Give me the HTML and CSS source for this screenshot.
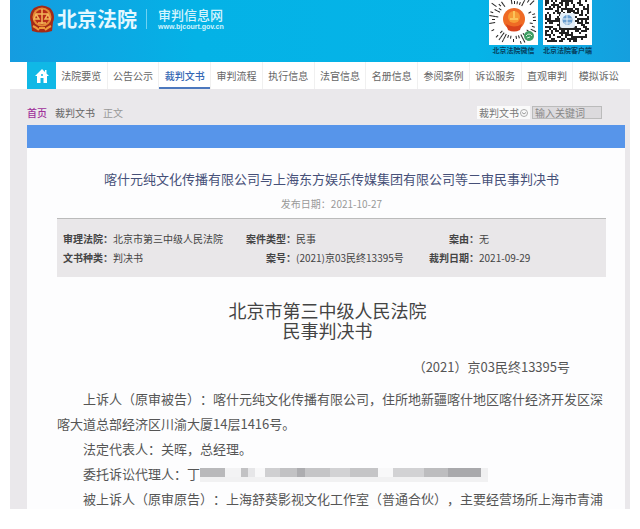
FILE: index.html
```html
<!DOCTYPE html>
<html lang="zh-CN">
<head>
	<meta charset="UTF-8">
	<title>北京法院审判信息网</title>
	<link rel="stylesheet" href="styles.css">
</head>
<body>
	<div class="page">
		<header class="header">
			<svg class="emblem" viewBox="0 0 26 28">
				<path d="M5 3Q13 -2 21 3Q27 9 24 17L23 26Q13 29 3 26L2 17Q-1 9 5 3z" fill="#a52a16"/>
				<circle cx="13" cy="12" r="9.5" fill="#e58a35"/>
				<circle cx="13" cy="12" r="7.5" fill="#b92c18"/>
				<path d="M13 4v15M7 9h12M7 9l-2 5h5zM19 9l-3 5h5zM9 18h8" stroke="#f4b65a" stroke-width="1.5" fill="none"/>
				<path d="M4 21q4 2 6 4M22 21q-4 2-6 4M10 23h6" stroke="#ef9a3b" stroke-width="2" fill="none"/>
			</svg>
			<h1 class="logo">北京法院</h1>
			<div class="site">
				<span class="site-name">审判信息网</span>
				<span class="site-url">www.bjcourt.gov.cn</span>
			</div>
			<div class="codes">
				<figure class="code">
					<svg class="qr" id="qrRound" viewBox="0 0 49 49">
						<g class="dots"></g>
						<circle cx="25" cy="24" r="13" fill="#fff"/>
						<circle cx="25" cy="23" r="11" fill="#ef6a24"/>
						<circle cx="25" cy="21" r="6" fill="#f79a35"/>
						<path d="M17 28q8 5 16 0l-2 6q-6 3-12 0z" fill="#d9421c"/>
						<path d="M25 15v8M21 23h8" stroke="#fbc45a" stroke-width="2"/>
						<circle cx="40" cy="40" r="5" fill="#3f9e63"/>
						<path d="M37 40q3-4 6 0M38 42l3-1" stroke="#d4f0dc" fill="none"/>
					</svg>
					<figcaption>北京法院微信</figcaption>
				</figure>
				<figure class="code">
					<svg class="qr" id="qrSquare" viewBox="0 0 49 49">
						<g class="dots"></g>
						<rect x="17" y="17" width="15" height="15" rx="2" fill="#e4eff8"/>
						<circle cx="24.5" cy="24" r="5" fill="#6a9fd0"/>
						<path d="M24 19v10M20 23h9M21 27h7" stroke="#e4eff8"/>
					</svg>
					<figcaption>北京法院客户端</figcaption>
				</figure>
			</div>
		</header>
		<nav class="nav">
			<a class="home" href="#" aria-label="首页">
				<svg viewBox="0 0 14 14"><path d="M7 0L0 7h2v7h3.500V9h3v5H12V7h2L11.500 4.500V1H10v2z" fill="#fff"/><circle cx="7" cy="6" r="1" fill="#10b8e6"/></svg>
			</a>
			<a href="#">法院要览</a>
			<a href="#">公告公示</a>
			<a class="active" href="#">裁判文书</a>
			<a href="#">审判流程</a>
			<a href="#">执行信息</a>
			<a href="#">法官信息</a>
			<a href="#">名册信息</a>
			<a href="#">参阅案例</a>
			<a href="#">诉讼服务</a>
			<a href="#">直观审判</a>
			<a href="#">模拟诉讼</a>
		</nav>
		<main class="content">
			<div class="bar">
				<div class="crumbs">
					<a href="#">首页</a>
					<span>裁判文书</span>
					<em>正文</em>
				</div>
				<form class="search">
					<div class="type">
						<select aria-label="类型"><option>裁判文书</option></select>
						<svg viewBox="0 0 8 8"><circle cx="4" cy="4" r="3.500" fill="none" stroke="#aaa"/><path d="M2 3.500l2 1.500 2-1.500" fill="none" stroke="#999"/></svg>
					</div>
					<input type="text" placeholder="输入关键词" aria-label="关键词">
				</form>
			</div>
			<article class="doc">
				<div class="strip"></div>
				<h2 class="title">喀什元纯文化传播有限公司与上海东方娱乐传媒集团有限公司等二审民事判决书</h2>
				<p class="date">发布日期：2021-10-27</p>
				<table class="info">
					<tr>
						<th>审理法院：</th><td>北京市第三中级人民法院</td>
						<th>案件类型：</th><td>民事</td>
						<th>案由：</th><td>无</td>
					</tr>
					<tr>
						<th>文书种类：</th><td>判决书</td>
						<th>案号：</th><td>(2021)京03民终13395号</td>
						<th>裁判日期：</th><td>2021-09-29</td>
					</tr>
				</table>
				<h3 class="court">北京市第三中级人民法院<br>民事判决书</h3>
				<p class="number">（2021）京03民终13395号</p>
				<div class="text">
					<p>上诉人（原审被告）：喀什元纯文化传播有限公司，住所地新疆喀什地区喀什经济开发区深喀大道总部经济区川渝大厦14层1416号。</p>
					<p>法定代表人：关晖，总经理。</p>
					<p>委托诉讼代理人：丁<span class="mask"></span></p>
					<p>被上诉人（原审原告）：上海舒葵影视文化工作室（普通合伙），主要经营场所上海市青浦</p>
				</div>
			</article>
		</main>
	</div>
	<script src="script.js"></script>
</body>
</html>
```
FILE: styles.css
```css
*{
	margin: 0;
	padding: 0;
	box-sizing: border-box;
}
body{
	font-family: "Noto Sans CJK SC", sans-serif;
	font-size: 10px;
	color: #444;
	background: #fff;
	padding: 0 10px 20px;
	height: 100vh;
	overflow: hidden;
	text-spacing-trim: space-all;
}
a{
	color: inherit;
	text-decoration: none;
}
.page{
	height: 100%;
	overflow: hidden;
	background: #eae8eb;
}
.header{
	height: 62px;
	display: flex;
	padding: 0 38px 0 19px;
	background: linear-gradient(90deg, #159ce0, #04b2e6 30%, #05b4e8 75%, #159fde);
}
.emblem{
	width: 26px;
	height: 28px;
	margin-top: 5px;
}
.logo{
	font-size: 20px;
	line-height: 38px;
	font-weight: 700;
	color: #e4f8ff;
	margin-left: 2px;
}
.site{
	height: 20px;
	margin: 9px 0 0 9px;
	padding-left: 11px;
	border-left: 1px solid #6fd2f2;
	color: #d4f4fd;
	display: flex;
	flex-direction: column;
	gap: 2px;
}
.site-name{
	font-size: 13px;
	line-height: 12px;
	font-weight: 500;
}
.site-url{
	font-family: "Liberation Sans", sans-serif;
	font-size: 7px;
	line-height: 8px;
	font-weight: 700;
}
.codes{
	margin-left: auto;
	display: flex;
	gap: 5px;
}
.code{
	width: 49px;
	height: 56px;
	display: flex;
	flex-direction: column;
	justify-content: flex-end;
	overflow: hidden;
}
.qr{
	width: 49px;
	height: 49px;
	flex: none;
	background: #fff;
}
.code figcaption{
	font-size: 7px;
	line-height: 11px;
	font-weight: 700;
	color: #06405f;
	text-align: center;
	white-space: nowrap;
}
.nav{
	height: 27px;
	display: flex;
	background: #fff;
	padding-right: 6px;
	padding-left: 17px;
	color: #666;
}
.nav a{
	flex: 1;
	line-height: 27px;
	text-align: center;
	white-space: nowrap;
	border-right: 1px solid #f0f0f0;
}
.nav a:last-child{
	border-right: 0;
}
.nav .home{
	flex: none;
	width: 29px;
	background: #10b8e6;
	border: 0;
	display: flex;
	align-items: center;
	justify-content: center;
}
.home svg{
	width: 14px;
	height: 14px;
}
.nav .active{
	color: #3568b4;
	font-weight: 500;
	box-shadow: inset 0 -2px #4c78be;
}
.content{
	padding: 0 5px 0 17px;
}
.bar{
	height: 36px;
	display: flex;
	align-items: center;
	justify-content: space-between;
	padding: 11px 23px 0 0;
}
.crumbs{
	display: flex;
	gap: 8px;
	line-height: 14px;
	color: #666;
}
.crumbs a{
	color: #a0309a;
	font-weight: 500;
}
.crumbs em{
	font-style: normal;
	color: #999;
}
.search{
	display: flex;
	gap: 2px;
}
.type{
	width: 53px;
	height: 13px;
	display: flex;
	align-items: center;
	background: #fafafa;
	padding: 0 2px;
}
.type select{
	flex: 1;
	min-width: 0;
	appearance: none;
	border: 0;
	background: none;
	font: inherit;
	line-height: 13px;
	color: #777;
}
.type svg{
	width: 8px;
	height: 8px;
	flex: none;
}
.search input{
	width: 70px;
	height: 13px;
	border: 1px solid #bbb;
	background: #dcdadd;
	font: inherit;
	line-height: 11px;
	padding: 0 2px;
}
.search input::placeholder{
	color: #888;
}
.doc{
	background: #fdfdfe;
	padding: 0 19px 0 30px;
}
.strip{
	height: 23px;
	margin: 0 -19px 0 -30px;
	background: #5795ea;
}
.title{
	margin-top: 21px;
	font-size: 13px;
	line-height: 20px;
	font-weight: 400;
	color: #465078;
	text-align: center;
	white-space: nowrap;
}
.date{
	margin-top: 7px;
	line-height: 16px;
	color: #999;
	text-align: center;
}
.info{
	width: 100%;
	margin-top: 6px;
	table-layout: fixed;
	border-collapse: separate;
	border-spacing: 0;
	background: #e9e7e9;
	border-top: 1px solid #bbb;
	padding: 10px 0;
	line-height: 19px;
}
.info th{
	width: 56px;
	text-align: right;
	font-weight: 700;
	white-space: nowrap;
}
.info td{
	white-space: nowrap;
}
.court{
	margin-top: 23px;
	padding-right: 8px;
	font-size: 18px;
	line-height: 20px;
	font-weight: 400;
	text-align: center;
}
.number{
	margin: 17px 36px 0 0;
	font-size: 13px;
	line-height: 20px;
	color: #555;
	text-align: right;
}
.text{
	margin-top: 9px;
	font-size: 13px;
	line-height: 25px;
	color: #555;
}
.text p{
	text-indent: 26px;
}
/* blurred-out names */
.mask{
	display: inline-block;
	width: 288px;
	height: 14px;
	vertical-align: middle;
	background: linear-gradient(90deg, #b9b9bb 25px, #f3f3f4 25px 41px, #c2c2c4 41px 48px, #e6e6e8 48px 55px, #f8f8f9 55px 65px, #cfcfd1 65px 80px, #c2c2c4 80px 97px, #adadb0 97px 105px, #c5c5c7 105px 130px, #d2d2d4 130px 150px, #c5c5c7 150px 178px, #f8f8f9 178px 193px, #d2d2d4 193px 224px, #bdbdbf 224px 248px, #a9a9ac 248px 281px, #f0f0f1 281px) top / 100% 9px no-repeat, #f1f1f2;
}
```
FILE: script.js
```js
// same seed, same dots
let seed=7;
function rand(){
	seed=(seed*1103515245+12345)%2147483648;
	return seed/2147483648;
}
function add(group,x,y,w,h){
	let r=document.createElementNS('http://www.w3.org/2000/svg','rect');
	r.setAttribute('x',x);
	r.setAttribute('y',y);
	r.setAttribute('width',w);
	r.setAttribute('height',h);
	r.setAttribute('fill','#222');
	group.appendChild(r);
	return r;
}
let square=document.querySelector('#qrSquare .dots');
for(let y=2;y<46;y+=2){
	for(let x=2;x<46;x+=2){
		if(rand()>0.48){
			add(square,x,y,2,2);
		}
	}
}
// radial code
let round=document.querySelector('#qrRound .dots');
for(let r=16;r<32;r+=3){
	for(let a=0;a<360;a+=9){
		let x=25+r*Math.cos(a*Math.PI/180);
		let y=24+r*Math.sin(a*Math.PI/180);
		if(rand()>0.45&&x>3&&x<45&&y>3&&y<45){
			add(round,x,y,3,1).setAttribute('transform','rotate('+a+' '+x+' '+y+')');
		}
	}
}
```
